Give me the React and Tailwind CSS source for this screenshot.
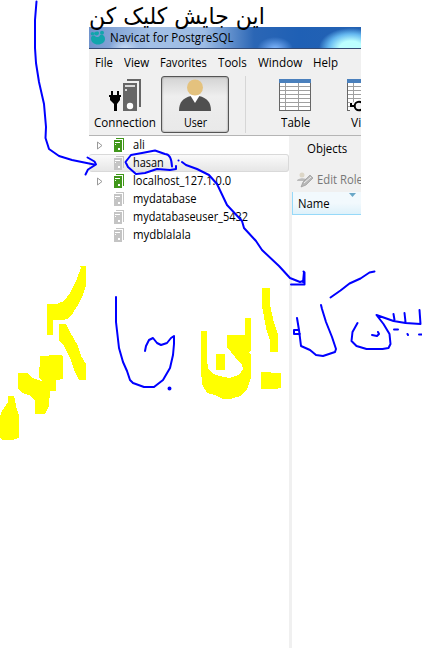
import { useLayoutEffect, useRef, useState } from "react";

// Condenses a label horizontally so that it fills the given width.
function Label({ w, children, className = "" }) {
  const ref = useRef(null);
  const [scale, setScale] = useState(1);
  useLayoutEffect(() => {
    setScale(w / ref.current.offsetWidth);
  }, [w]);
  return (
    <span className={`block shrink-0 whitespace-nowrap ${className}`} style={{ width: w }}>
      <span ref={ref} className="inline-block origin-left" style={{ transform: `scaleX(${scale})` }}>
        {children}
      </span>
    </span>
  );
}

function Server({ on }) {
  const c = on ? "#41971b" : "#c4c4c4";
  return (
    <svg width="11" height="14" viewBox="0 0 11 14" className="shrink-0" shapeRendering="crispEdges">
      <path d="M2 0h8v12h-1V1H2z" fill={c} />
      <rect y="2" width="8" height="12" fill={c} />
      <path d="M1 4.500h5M1 6.500h1" stroke="#fff" />
      <rect x="4" y="10" width="2" height="2" fill="#fff" />
    </svg>
  );
}

function TableIcon({ className = "" }) {
  return (
    <svg width="32" height="32" viewBox="0 0 32 32" className={`shrink-0 ${className}`} shapeRendering="crispEdges">
      <rect width="32" height="32" fill="#fff" />
      <path d="M0 7.5h32M0 11.5h32M0 15.5h32M0 19.5h32M0 23.5h32M0 27.5h32M6.5 4v28M19.5 4v28" stroke="#a0a0a0" />
      <path d="M.5 0v31.5h31V0" fill="none" stroke="#666" />
      <rect width="32" height="4" fill="#4a80bd" />
    </svg>
  );
}

const rows = [
  { name: "ali", w: 12, on: true },
  { name: "hasan", w: 31, selected: true },
  { name: "localhost_127.1.0.0", w: 98, on: true },
  { name: "mydatabase", w: 64 },
  { name: "mydatabaseuser_5432", w: 115 },
  { name: "mydblalala", w: 58 },
];

function Row({ name, w, on, selected }) {
  return (
    <div
      className={`flex h-[18px] items-center ${
        selected ? "rounded-[3px] border border-l-0 border-[#d9d9d9] bg-gradient-to-b from-[#fafafa] to-[#e6e6e6]" : ""
      }`}
    >
      <span className="flex w-[25px] shrink-0 pl-2">
        {on && (
          <svg width="6" height="9" viewBox="0 0 6 9">
            <path d="M.5 1v7L5 4.5z" fill="#fff" stroke="#999" />
          </svg>
        )}
      </span>
      <Server on={on} />
      <Label w={w} className="ml-2 leading-[18px]">{name}</Label>
    </div>
  );
}

function Ink() {
  return (
    <svg className="absolute left-0 top-0" width="422" height="648" viewBox="0 0 422 648">
      <g fill="#ff0" shapeRendering="crispEdges">
        <path d="M80 266h6v19l-3 10-5 10-7 11-4 3-5 1h-9v15h-6v-31h10l7-3 6-8 6-12 5-13z" />
        <path d="M59 324h7l4 8 8 14 3 10 5 8v16h-7l-5-10-3-10-7-14-5-6z" />
        <path d="M40 356h8l1-1h11l3 1v23l-7 1v11h-6l-1 15-4 8h-10v-13l-4-5-9-3-4-4v-16h9l5 5 10 3-3-3z" />
        <path d="M8 396h6l3 14 2 5v23l-7 2H2l-2-2v-22l2-5 6-9z" />
        <path d="M201 331h6v29l1 8 5 6 7 2 9 2 10-3 4-6-1-4-7-8-8-10v-12h18v-17h6v33l-2 1 2 3v23l-4 11-6 7-11 3h-7l-8-4-8-2-5-9-1-14z" />
        <path d="M216 354h9v16h-9z" />
        <path d="M262 288h8v17l4 18 4 11v18h-8v-12l-4-12-4-22z" />
        <path d="M261 372h10v1h10v15l-7 1h-13z" />
      </g>
      <g fill="none" stroke="#00f" strokeWidth="2" strokeLinecap="round" strokeLinejoin="round">
        <path d="M36.500 1.500 L35 20 V48 L36 63 L39 82 L44 104 L46 127 L45.500 138 L49 149 L59 156 L72 160 L94 164.500" />
        <path d="M87.500 157.500l7 4 1.500 3-8 5-2.500 5" />
        <path d="M172 166.500 C171.500 157 168 154 165 154 L155 150.500 L142 153 L131 155 L125.500 162 L128 167 L136 174 L145 173 L157 169 L170 170 L176 169 V166" />
        <path d="M178.500 160.500h.1M182 162l4 3 11 4 12 6 8 9 10 21 15 16 2 7 12 13 6 9 17 16 11 12 10 4 3-1" />
        <path d="M303.500 271.500l1 1V284.500H291M304 272l-1 10" />
        <path d="M116 297v25l3 26 4 14 4 9 3 9 3 3 11 4h10l9-7 7-12 3-13 1-11v-8l-3 2-4 5-6 2-4-2-4-5-4 2-3 6-1 5" />
        <circle cx="169.500" cy="388.500" r="1" fill="#00f" />
        <path d="M374.500 271.500l-5 1-9 6-11 5-9 7-10 7" />
        <path d="M297 318l2 12 2 16 9 4 6 5 7 1 12-4 1-3-4-12-6-15-4-13-1-4M299 330h-5v4h6" />
        <path d="M357.500 323l-5 9-1 9 5 5 10 3h16l6-1 2-4-1-10-6-10-7-9 17 6 12 2 15 1-1-14M393.500 314l1 6M404.500 313l1 9M372 335l5 1 2-2-1-2M394 329.500h4M407.500 334l.5 1M419 334.500h3" />
      </g>
    </svg>
  );
}

export default function App() {
  return (
    <div className="relative flex h-[648px] w-[422px] flex-col overflow-hidden bg-white pl-[89px] font-['Open_Sans','Noto_Sans',sans-serif] text-[12px] text-black">
      <div className="h-[27px] w-[200px] shrink-0 font-['DejaVu_Sans',serif] text-[23px] leading-[32px]">
        <Label w={176}><bdi dir="rtl">این جایش کلیک کن</bdi></Label>
      </div>

      <header className="flex h-[22px] w-[272px] shrink-0 items-center border-b border-[#354a72] bg-[radial-gradient(ellipse_16px_12px_at_36px_22px,#c9dcf5,transparent),radial-gradient(ellipse_18px_12px_at_186px_22px,#83b9ff,transparent),radial-gradient(ellipse_32px_20px_at_262px_21px,#bcffff_35%,#65b8f0_70%,transparent),linear-gradient(90deg,#6f93cc_0px,#a3c0e6_60px,#9dbce4_115px,#6f9ad2_135px,#2b66b5_165px,#1f60b5_210px,#2462b3_272px)]">
        <svg width="16" height="15" viewBox="0 0 16 15" className="ml-px shrink-0">
          <path d="M1 8.500C1 6 3 5 5 6c1 2 5 1 5-1 3-1 5 1 5 4 0 3-3 5.500-7 5.500S1 12 1 8.500z" fill="#12a5ac" />
          <circle cx="2.500" cy="3.800" r="1.800" fill="#12a5ac" />
          <path d="M4 4c0-3 5-3 5-1 0 3-4 3-5 1z" fill="#12a5ac" />
          <circle cx="12" cy="2.800" r="2" fill="#12a5ac" />
        </svg>
        <Label w={124} className="ml-[4px] leading-[20px]">Navicat for PostgreSQL</Label>
      </header>

      <nav className="flex h-[27px] w-[272px] shrink-0 items-center gap-[11px] bg-[#f0f0f0] pl-[6px]">
        <Label w={18}>File</Label>
        <Label w={25}>View</Label>
        <Label w={47}>Favorites</Label>
        <Label w={29}>Tools</Label>
        <Label w={44}>Window</Label>
        <Label w={25}>Help</Label>
      </nav>

      <div className="flex h-[60px] w-[272px] shrink-0 overflow-hidden border-b border-[#b5b5b5] bg-[#f0f0f0] leading-[18px]">
        <div className="flex w-[72px] shrink-0 flex-col items-center pt-[3px]">
          <svg width="34" height="33" viewBox="0 0 34 33" className="shrink-0">
            <path d="M19 0h14v28h-2V2H19z" fill="#666" />
            <path d="M15 4h14v28H15z" fill="#666" />
            <path d="M17 7h10M17 11h2" stroke="#fff" strokeWidth="1.500" />
            <circle cx="22" cy="27" r="3.200" fill="#fff" />
            <path d="M2 16h10v5l-3 4v7H6v-7l-4-4z" />
            <path d="M4 12v6M10 12v6M1 17h12" stroke="#000" strokeWidth="2" />
          </svg>
          <Label w={62} className="mt-[2px]">Connection</Label>
        </div>
        <div className="flex h-[57px] w-[68px] shrink-0 flex-col items-center rounded-[3px] border border-[#555] bg-gradient-to-b from-[#d3d3d3] via-[#eee] via-35% to-[#e9e9e9] pt-[2px] shadow-[inset_0_0_2px_#777]">
          <svg width="32" height="33" viewBox="0 0 32 33" className="shrink-0">
            <path d="M0 32c0-9 4-13 12-15h8c8 2 12 6 12 15z" fill="#505050" />
            <path d="M11 16l5 8 5-8z" fill="#fff" />
            <circle cx="16" cy="8.500" r="8" fill="#e4c27e" />
          </svg>
          <Label w={23} className="mt-[2px]">User</Label>
        </div>
        <div className="ml-4 h-[57px] w-px shrink-0 bg-[#d6d6d6]" />
        <div className="flex w-[98px] shrink-0 flex-col items-center pt-[3px]">
          <TableIcon />
          <Label w={29} className="mt-[3px]">Table</Label>
        </div>
        <div className="flex w-16 shrink-0 flex-col pl-[3px] pt-[3px]">
          <div className="relative h-8">
            <TableIcon />
            <svg className="absolute left-[3px] top-[20px]" width="20" height="13" viewBox="0 0 20 13">
              <path d="M0 3h20v10H0z" fill="#f0f0f0" />
              <path d="M1 4v3h4" fill="none" stroke="#000" strokeWidth="2" />
              <circle cx="9" cy="7" r="4.300" fill="#f0f0f0" stroke="#000" strokeWidth="2" />
            </svg>
          </div>
          <Label w={26} className="ml-[4px] mt-[3px]">View</Label>
        </div>
      </div>

      <main className="flex min-h-0 flex-1">
        <section className="w-[200px] shrink-0">
          {rows.map((r) => <Row key={r.name} {...r} />)}
        </section>
        <div className="w-[3px] shrink-0 bg-[#f0f0f0]" />
        <aside className="w-[69px] shrink-0 overflow-hidden">
          <div className="flex h-[56px] flex-col bg-[#f0f0f0]">
            <div className="pl-[15px] pt-[4px] leading-[18px]"><Label w={40}>Objects</Label></div>
            <div className="flex items-center gap-[4px] pl-[5px] pt-[13px] leading-[18px] text-[#777]">
              <svg width="16" height="16" viewBox="0 0 16 16" className="shrink-0">
                <circle cx="5" cy="3" r="2.500" fill="#dcd6c7" />
                <path d="M0 9c0-3 10-4 10 0z" fill="#bbb" />
                <path d="M4 15l2-5 7-7 3 3-7 7z" fill="#b7b7b7" stroke="#999" strokeWidth=".7" />
                <path d="M7 11l7-6" stroke="#eee" />
              </svg>
              <Label w={46}>Edit Role</Label>
            </div>
          </div>
          <div className="relative h-[23px] border-b border-l border-[#96d9f9] bg-gradient-to-b from-[#f2f9fd] from-50% to-[#def1fa] pl-[5px] leading-[24px]">
            <Label w={32}>Name</Label>
            <svg className="absolute left-[56px] top-px" width="7" height="4" viewBox="0 0 7 4">
              <path d="M0 0h7L3.500 4z" fill="#6aa7c7" />
            </svg>
          </div>
        </aside>
      </main>
      <Ink />
    </div>
  );
}
